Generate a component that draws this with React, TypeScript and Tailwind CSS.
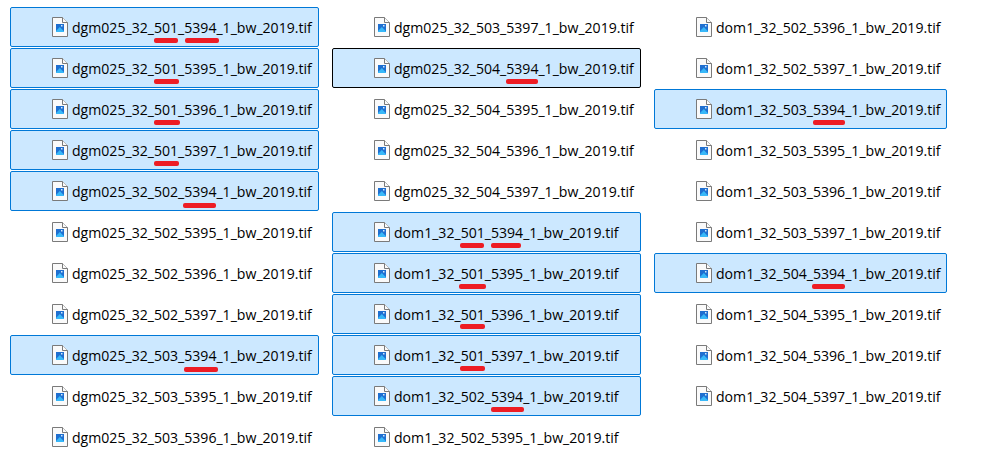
type Mark = { left: number; top?: number; width: number };
type Entry = { name: string; selected?: boolean; focused?: boolean; marks?: Mark[] };

const columns: { width: string; files: Entry[] }[] = [
  {
    width: "w-[309px]",
    files: [
      { name: "dgm025_32_501_5394_1_bw_2019.tif", selected: true, marks: [{ left: 144, width: 24 }, { left: 175, width: 34 }] },
      { name: "dgm025_32_501_5395_1_bw_2019.tif", selected: true, marks: [{ left: 144, width: 25 }] },
      { name: "dgm025_32_501_5396_1_bw_2019.tif", selected: true, marks: [{ left: 144, width: 26 }] },
      { name: "dgm025_32_501_5397_1_bw_2019.tif", selected: true, marks: [{ left: 144, width: 25 }] },
      { name: "dgm025_32_502_5394_1_bw_2019.tif", selected: true, marks: [{ left: 173, top: 32, width: 33 }] },
      { name: "dgm025_32_502_5395_1_bw_2019.tif" },
      { name: "dgm025_32_502_5396_1_bw_2019.tif" },
      { name: "dgm025_32_502_5397_1_bw_2019.tif" },
      { name: "dgm025_32_503_5394_1_bw_2019.tif", selected: true, marks: [{ left: 174, top: 32, width: 34 }] },
      { name: "dgm025_32_503_5395_1_bw_2019.tif" },
      { name: "dgm025_32_503_5396_1_bw_2019.tif" },
    ],
  },
  {
    width: "w-[309px]",
    files: [
      { name: "dgm025_32_503_5397_1_bw_2019.tif" },
      { name: "dgm025_32_504_5394_1_bw_2019.tif", selected: true, focused: true, marks: [{ left: 174, width: 32 }] },
      { name: "dgm025_32_504_5395_1_bw_2019.tif" },
      { name: "dgm025_32_504_5396_1_bw_2019.tif" },
      { name: "dgm025_32_504_5397_1_bw_2019.tif" },
      { name: "dom1_32_501_5394_1_bw_2019.tif", selected: true, marks: [{ left: 128, width: 24 }, { left: 159, width: 30 }] },
      { name: "dom1_32_501_5395_1_bw_2019.tif", selected: true, marks: [{ left: 127, width: 27 }] },
      { name: "dom1_32_501_5396_1_bw_2019.tif", selected: true, marks: [{ left: 128, top: 30, width: 25 }] },
      { name: "dom1_32_501_5397_1_bw_2019.tif", selected: true, marks: [{ left: 128, width: 25 }] },
      { name: "dom1_32_502_5394_1_bw_2019.tif", selected: true, marks: [{ left: 159, width: 33 }] },
      { name: "dom1_32_502_5395_1_bw_2019.tif" },
    ],
  },
  {
    width: "w-[293px]",
    files: [
      { name: "dom1_32_502_5396_1_bw_2019.tif" },
      { name: "dom1_32_502_5397_1_bw_2019.tif" },
      { name: "dom1_32_503_5394_1_bw_2019.tif", selected: true, marks: [{ left: 159, width: 32 }] },
      { name: "dom1_32_503_5395_1_bw_2019.tif" },
      { name: "dom1_32_503_5396_1_bw_2019.tif" },
      { name: "dom1_32_503_5397_1_bw_2019.tif" },
      { name: "dom1_32_504_5394_1_bw_2019.tif", selected: true, marks: [{ left: 158, width: 33 }] },
      { name: "dom1_32_504_5395_1_bw_2019.tif" },
      { name: "dom1_32_504_5396_1_bw_2019.tif" },
      { name: "dom1_32_504_5397_1_bw_2019.tif" },
    ],
  },
];

function ImageFileIcon() {
  return (
    <svg width="16" height="20" viewBox="0 0 16 20" className="shrink-0" aria-hidden="true">
      <path d="M.5.5H10.5L15.5 5.5V19.5H.5Z" fill="#fafafa" stroke="#7a7a7a" />
      <path d="M10.5.5V5.5H15.5" fill="#fafafa" stroke="#7a7a7a" />
      <rect x="4" y="7" width="8" height="8" fill="#1f6fd0" />
      <path d="M4 15V14L7.8 10L12 14.2V15Z" fill="#38b8f8" />
      <rect x="9" y="8" width="1.5" height="1.5" fill="#d3eafc" />
    </svg>
  );
}

function FileRow({ file }: { file: Entry }) {
  const look = file.focused
    ? "border-black bg-[#cce8ff]"
    : file.selected
      ? "border-[#0078d7] bg-[#cce8ff]"
      : "border-transparent";
  return (
    <div className="relative h-10">
      <div className={`flex h-full items-center rounded-[2px] border pl-[41px] ${look}`}>
        <ImageFileIcon />
        <span className="ml-1 origin-left scale-x-[0.939] whitespace-nowrap">{file.name}</span>
      </div>
      {file.marks?.map((mark) => (
        <span
          key={mark.left}
          className="absolute h-[5px] rounded-[2px] bg-[#ed1c24]"
          style={{ left: mark.left, top: mark.top ?? 31, width: mark.width }}
        />
      ))}
    </div>
  );
}

export default function App() {
  return (
    <div className="flex h-[468px] w-[983px] items-start gap-[13px] overflow-hidden bg-white pt-[7px] pl-[10px] font-['Open_Sans','Noto_Sans',sans-serif] text-[15px] leading-5 text-black">
      {columns.map((column) => (
        <div key={column.files[0].name} className={`flex shrink-0 flex-col gap-px ${column.width}`}>
          {column.files.map((file) => (
            <FileRow key={file.name} file={file} />
          ))}
        </div>
      ))}
    </div>
  );
}
